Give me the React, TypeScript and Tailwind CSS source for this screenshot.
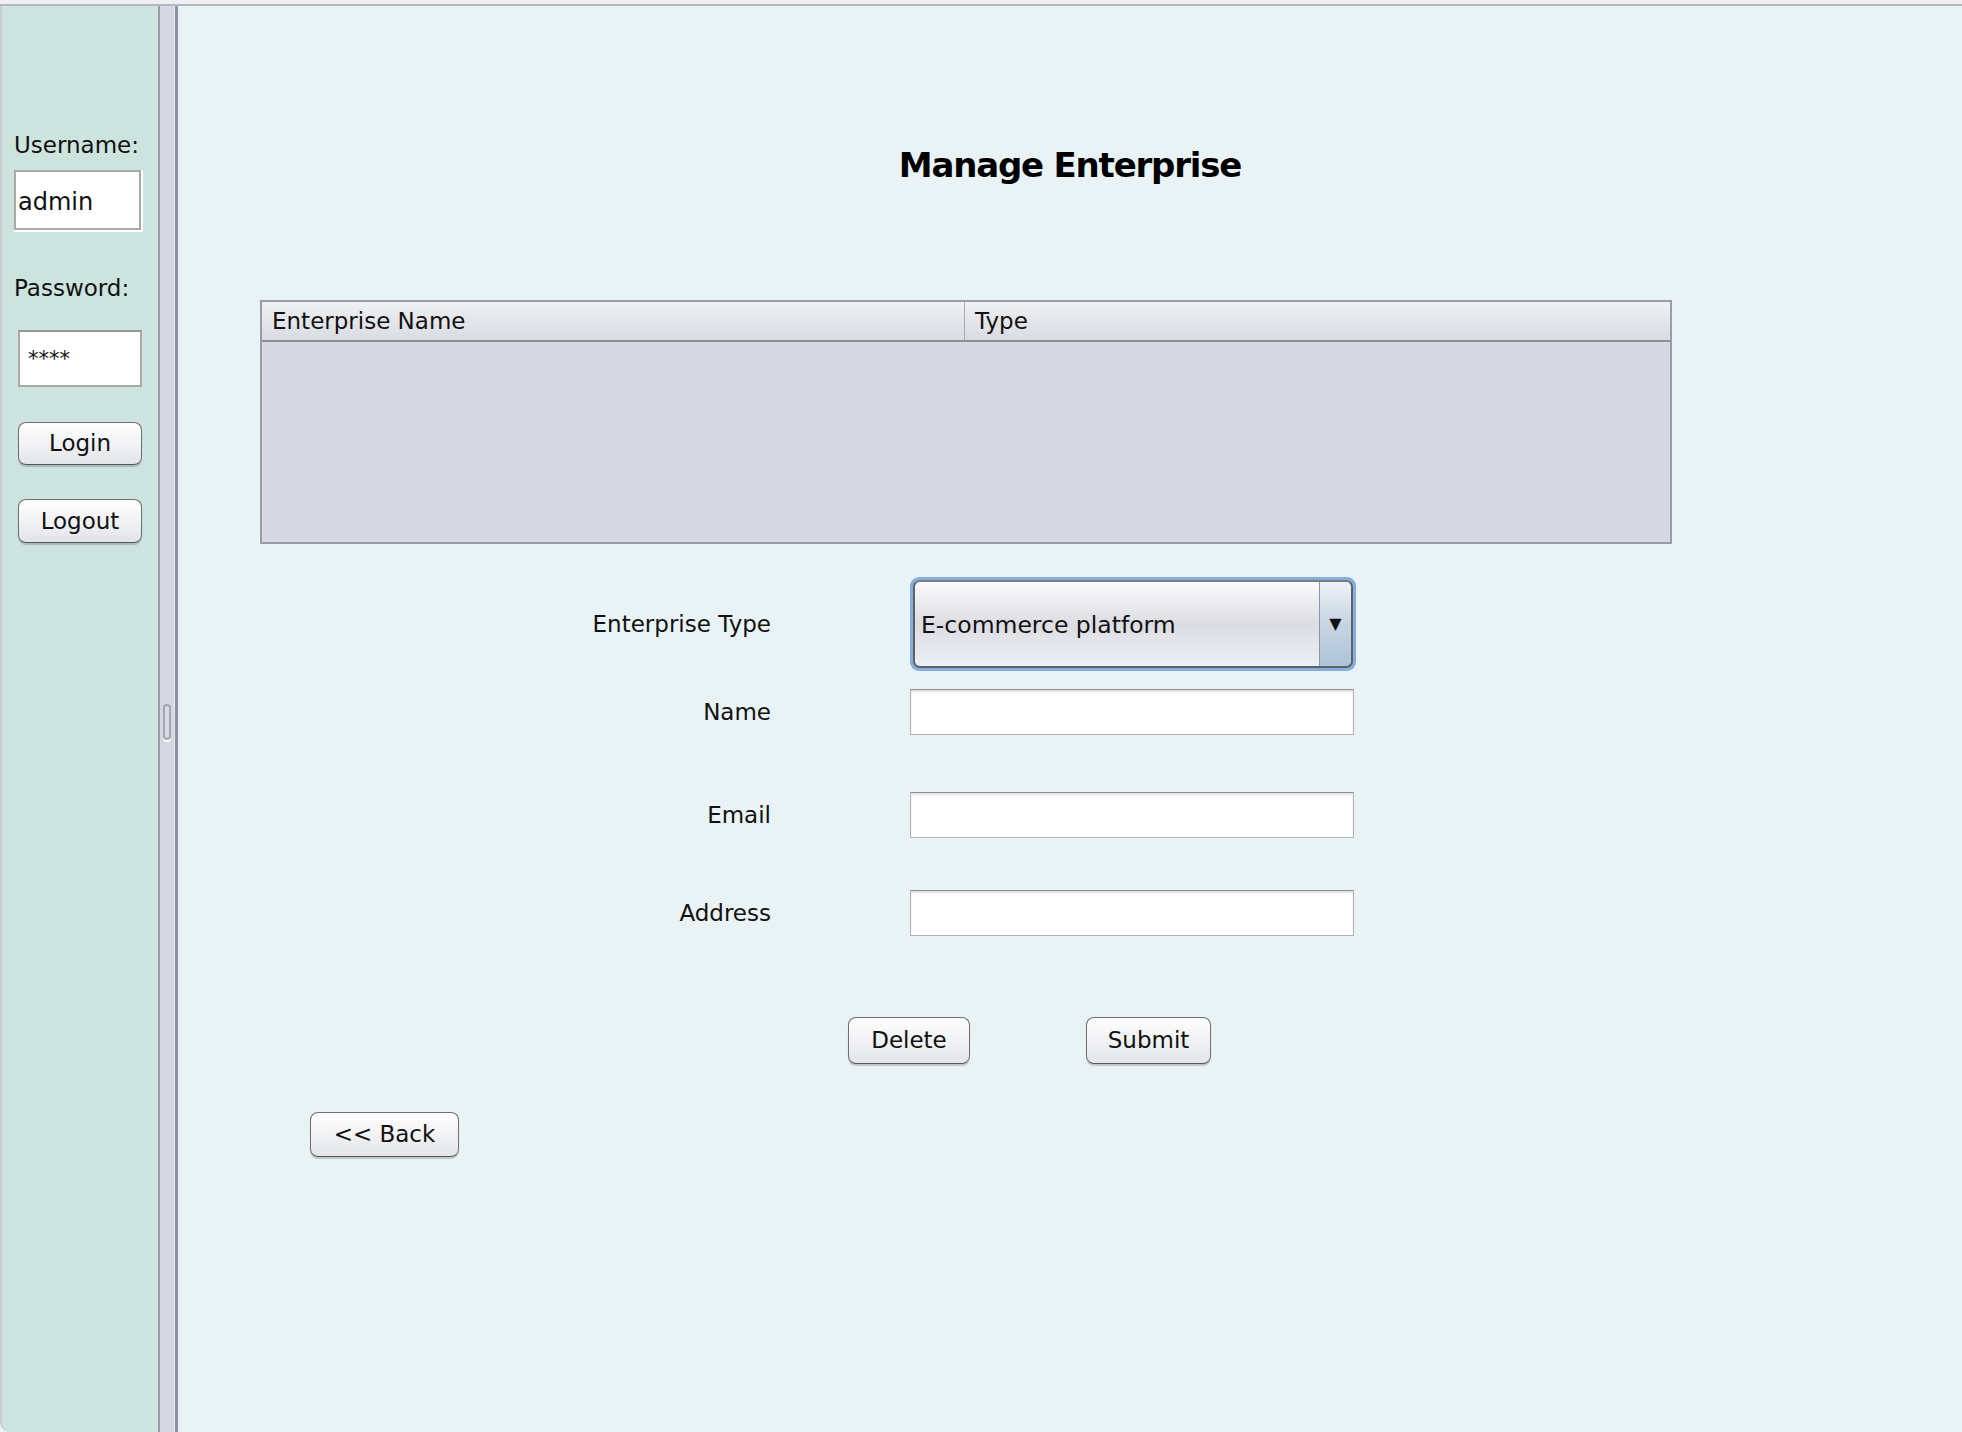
import React from "react";

const font = { fontFamily: '"DejaVu Sans", Verdana, sans-serif' };

function Btn({ label, w, h }: { label: string; w: string; h: string }) {
  return (
    <div
      className={`${w} ${h} flex items-center justify-center rounded-[8px] border border-[#6e6f74] border-b-[#55565b] bg-gradient-to-b from-[#fefefe] via-[#f1f2f4] to-[#e2e4ea] text-[23px] text-[#111] shadow-[0_2px_1px_rgba(0,0,0,0.18)]`}
    >
      {label}
    </div>
  );
}

function TextField({ className = "" }: { className?: string }) {
  return (
    <div
      className={`h-[46px] w-[444px] border border-[#b3b3b3] border-t-[#8e8e8e] bg-white shadow-[inset_0_2px_2px_rgba(0,0,0,0.12)] ${className}`}
    />
  );
}

function FormRow({
  label,
  children,
  className = "",
}: {
  label: string;
  children: React.ReactNode;
  className?: string;
}) {
  return (
    <div className={`flex items-center ${className}`}>
      <div className="w-[593px] text-right text-[23px] text-[#111]">{label}</div>
      <div className="ml-[139px]">{children}</div>
    </div>
  );
}

export default function App() {
  return (
    <div className="flex h-[1432px] w-[1962px] flex-col overflow-hidden bg-[#e9f2f4]" style={font}>
      {/* top strip */}
      <div className="h-[4px] bg-[#efeef2]" />
      <div className="h-[2px] bg-[#b5b7bf]" />

      <div className="flex flex-1">
        {/* sidebar */}
        <div className="flex w-[158px] flex-col rounded-bl-[10px] border-l-[2px] border-[#c9ccd2] bg-[#cde3de] text-[#111]">
          <div className="ml-[12px] mt-[124px] text-[23px] leading-[30px]">Username:</div>
          <div className="ml-[12px] mt-[10px] h-[62px] w-[129px] border-r-[2px] border-b-[2px] border-white">
            <div className="flex h-full w-full items-center border-[2px] border-[#a9a9a9] bg-white pl-[2px] pt-[4px] text-[24px]">
              admin
            </div>
          </div>
          <div className="ml-[12px] mt-[41px] text-[23px] leading-[30px]">Password:</div>
          <div className="ml-[16px] mt-[27px] flex h-[57px] w-[124px] items-center border-[2px] border-[#a9a9a9] border-t-[#999] bg-white pl-[8px] pt-[2px] text-[21px]">
            ****
          </div>
          <div className="ml-[16px] mt-[35px]">
            <Btn label="Login" w="w-[124px]" h="h-[43px]" />
          </div>
          <div className="ml-[16px] mt-[34px]">
            <Btn label="Logout" w="w-[124px]" h="h-[44px]" />
          </div>
        </div>

        {/* splitter */}
        <div className="w-[2px] bg-[#9a9ca8]" />
        <div className="flex w-[14px] items-start justify-center bg-[#d5d8e0] pt-[698px]">
          <div className="h-[36px] w-[8px] rounded-full border-[2px] border-[#a4a7b2] bg-[#d9dce4] shadow-[0_2px_0_#ffffff]" />
        </div>
        <div className="w-[1px] bg-[#e4e7ed]" />
        <div className="w-[3px] bg-[#8f92a0]" />

        {/* main */}
        <div className="flex flex-1 flex-col text-[#111]">
          <div className="mt-[139px] text-center text-[34px] font-bold leading-[40px] tracking-[-1.2px] text-black">
            Manage Enterprise
          </div>

          {/* table */}
          <div className="ml-[82px] mt-[115px] flex h-[244px] w-[1412px] flex-col border-[2px] border-[#9a9ca6] bg-[#d6d9e1]">
            <div className="flex h-[40px] border-b-[2px] border-[#8c8f99] bg-gradient-to-b from-[#f0f1f4] via-[#e3e5ea] to-[#d9dce3] text-[23px]">
              <div className="flex w-[703px] items-center border-r border-[#a7a9b2] pl-[10px]">Enterprise Name</div>
              <div className="flex flex-1 items-center pl-[10px]">Type</div>
            </div>
          </div>

          {/* form */}
          <FormRow label="Enterprise Type" className="mt-[33px]">
            <div className="h-[94px] w-[446px] rounded-[9px] bg-[#84aedb] p-[3px]">
              <div className="flex h-full w-full overflow-hidden rounded-[7px] border-[2px] border-[#5e6066] border-t-[#7a7c82]">
                <div className="flex flex-1 items-center bg-gradient-to-b from-[#fbfbfc] via-[#dcdde2] to-[#eeeff5] pl-[6px] pt-[4px] text-[23.5px]">
                  E-commerce platform
                </div>
                <div className="flex w-[32px] items-center justify-center border-l border-[#8d96a4] bg-gradient-to-b from-[#eef2f7] via-[#c7d4e2] to-[#aec4da] text-[16px]">
                  ▼
                </div>
              </div>
            </div>
          </FormRow>

          <FormRow label="Name" className="mt-[18px]">
            <TextField />
          </FormRow>
          <FormRow label="Email" className="mt-[57px]">
            <TextField />
          </FormRow>
          <FormRow label="Address" className="mt-[52px]">
            <TextField />
          </FormRow>

          <div className="ml-[670px] mt-[81px] flex">
            <Btn label="Delete" w="w-[122px]" h="h-[47px]" />
            <div className="ml-[116px]">
              <Btn label="Submit" w="w-[125px]" h="h-[47px]" />
            </div>
          </div>

          <div className="ml-[132px] mt-[48px]">
            <Btn label="<< Back" w="w-[149px]" h="h-[45px]" />
          </div>
        </div>
      </div>
    </div>
  );
}
